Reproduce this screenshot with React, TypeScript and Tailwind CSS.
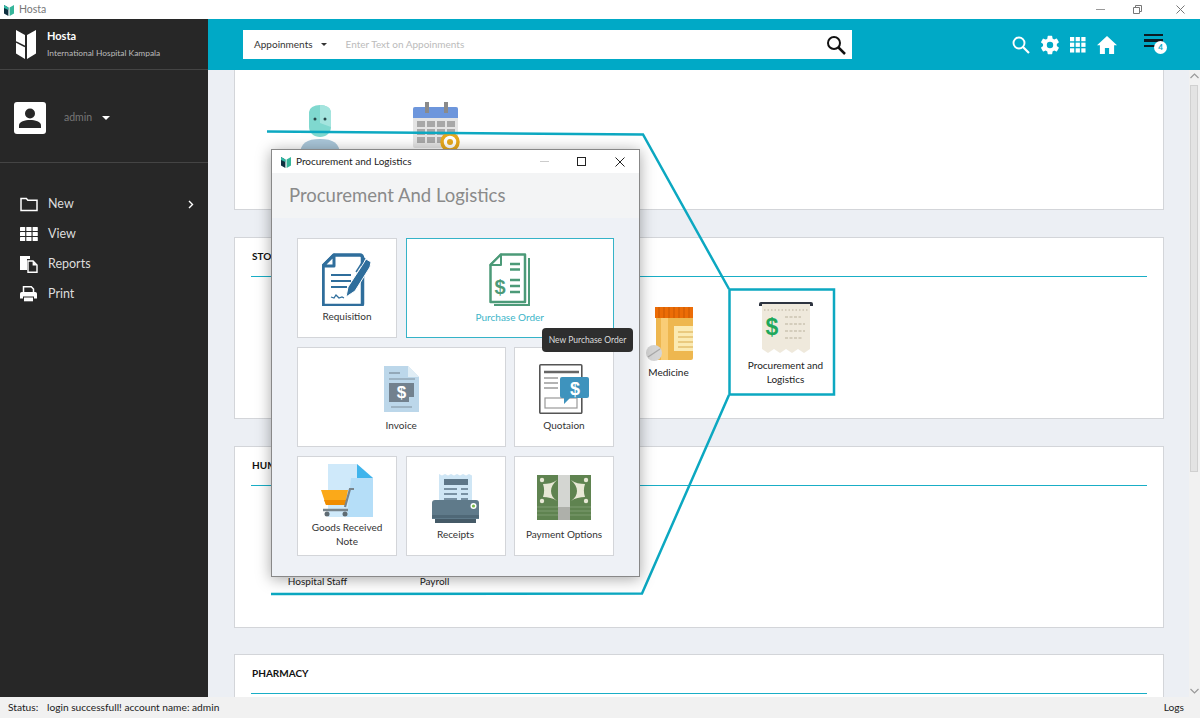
import type { ReactNode } from "react";

const font = { fontFamily: 'Lato, "Open Sans", sans-serif' };

function SmallLogo() {
  return (
    <svg width="10" height="12" viewBox="0 0 10 12">
      <path d="M0 1l4.400 2.400V12L0 9.600z" fill="#0e2f3f" />
      <path d="M0 1l4.400 2.400V6L0 4z" fill="#2fb9a4" />
      <path d="M5.600 3.400L10 1v8.600L5.600 12z" fill="#35b59a" />
    </svg>
  );
}

function HostaLogo() {
  return (
    <svg width="20" height="30" viewBox="0 0 20 30" fill="#fff">
      <path d="M0 1l9 5v24l-9-5.500z" />
      <path d="M11 6l9-5v23.500L11 30z" />
      <path d="M0 13l9 4.500" stroke="#272727" strokeWidth="1.400" />
    </svg>
  );
}

function MenuIcon({ name }: { name: string }) {
  if (name === "New")
    return (
      <svg width="18" height="15" viewBox="0 0 18 15" fill="none" stroke="#fff" strokeWidth="1.500">
        <path d="M1 13.600V1.600h5.400l1.400 1.600H17v10.400z" />
      </svg>
    );
  if (name === "View")
    return (
      <svg width="18" height="14" viewBox="0 0 18 14" fill="#fff">
        {[0, 5, 10].map((y) =>
          [0, 6.300, 12.600].map((x) => <rect key={`${x}-${y}`} x={x} y={y} width="5.200" height="4" rx="0.600" />),
        )}
      </svg>
    );
  if (name === "Reports")
    return (
      <svg width="18" height="18" viewBox="0 0 18 18">
        <path d="M0 1h10v3H7v11H0z" fill="#fff" />
        <path d="M8 6h5l4 4v7.200H8z" fill="none" stroke="#fff" strokeWidth="1.400" />
        <path d="M12.600 6v4.400H17z" fill="#fff" />
      </svg>
    );
  return (
    <svg width="17" height="16" viewBox="0 0 17 16" fill="#fff">
      <path d="M3.500 6V.800h7.800l2.200 2.200v3" fill="none" stroke="#fff" strokeWidth="1.500" />
      <path d="M1.800 6h13.400A1.800 1.800 0 0 1 17 7.800v4.700h-3v-2H3v2H0V7.800A1.800 1.800 0 0 1 1.800 6z" />
      <rect x="4" y="11.500" width="9" height="3.800" />
    </svg>
  );
}

function GearIcon() {
  return (
    <svg width="22" height="22" viewBox="0 0 24 24" fill="#fff">
      <path d="M19.400 13c.05-.33.1-.66.1-1s-.05-.67-.1-1l2.100-1.650a.5.500 0 0 0 .12-.64l-2-3.460a.5.500 0 0 0-.61-.22l-2.490 1a7.300 7.300 0 0 0-1.730-1l-.38-2.650A.49.490 0 0 0 13.930 2h-4a.49.490 0 0 0-.49.420l-.38 2.650a7.700 7.700 0 0 0-1.730 1l-2.490-1a.49.490 0 0 0-.61.220l-2 3.460a.49.490 0 0 0 .12.640L4.470 11c-.05.330-.1.670-.1 1s.05.670.1 1l-2.110 1.650a.5.500 0 0 0-.12.640l2 3.460c.12.220.38.300.61.220l2.490-1c.52.400 1.080.730 1.730 1l.38 2.650c.03.240.24.420.49.420h4c.25 0 .46-.18.49-.42l.38-2.650c.65-.27 1.210-.6 1.730-1l2.490 1c.23.080.49 0 .61-.22l2-3.460a.5.500 0 0 0-.12-.64zM12 15.500a3.500 3.500 0 1 1 0-7 3.500 3.500 0 0 1 0 7z" />
    </svg>
  );
}

function TopIcons() {
  return (
    <div className="flex items-center">
      <svg className="mr-[9px]" width="18" height="18" viewBox="0 0 18 18" fill="none" stroke="#fff" strokeWidth="1.900">
        <circle cx="7" cy="7" r="5.500" />
        <path d="M11 11l6 6" strokeWidth="2.200" />
      </svg>
      <GearIcon />
      <svg className="ml-[9px]" width="16" height="16" viewBox="0 0 17 17" fill="#fff">
        {[0, 6, 12].map((y) =>
          [0, 6, 12].map((x) => <rect key={`${x}-${y}`} x={x} y={y} width="4.500" height="4.500" />),
        )}
      </svg>
      <svg className="ml-[11px]" width="20" height="18" viewBox="0 0 20 18" fill="#fff">
        <path d="M10 0L0 9.200h2.900V18h5v-6h4.200v6h5V9.200H20z" />
      </svg>
      <div className="relative ml-[27px] mr-[36px] h-[24px] w-[20px]">
        <div className="mt-[1px] flex flex-col gap-[3px]">
          <div className="h-[2.500px] w-[19px] bg-[#0b1b22]" />
          <div className="h-[2.500px] w-[19px] bg-[#0b1b22]" />
          <div className="h-[2.500px] w-[14px] bg-[#0b1b22]" />
        </div>
        <span className="absolute left-[10px] top-[8px] flex h-[13px] w-[13px] items-center justify-center rounded-full bg-white text-[8px] font-bold text-[#00a9c6]">
          4
        </span>
      </div>
    </div>
  );
}

function RequisitionIcon() {
  return (
    <svg width="50" height="53" viewBox="0 0 50 53">
      <path d="M12 2h26a2.500 2.500 0 0 1 2.500 2.500v46a2 2 0 0 1-2 2H3a2 2 0 0 1-2-2V13z" fill="#fff" stroke="#2f6e9c" strokeWidth="3.500" strokeLinejoin="round" />
      <path d="M12 2v11H1z" fill="#fff" stroke="#2f6e9c" strokeWidth="3" strokeLinejoin="round" />
      <path d="M9 22h20M9 28h20M9 34h16" stroke="#2f6e9c" strokeWidth="2" />
      <path d="M9 44l3 1 2-3 3 3 3-1 2 1" stroke="#2f6e9c" strokeWidth="1.300" fill="none" />
      <path d="M24 44l2-10 15-23 3-5 5 3-1 5-15 24z" fill="#2f6e9c" stroke="#fff" strokeWidth="1" />
      <path d="M34 19l9-14" stroke="#2f6e9c" strokeWidth="1.400" />
    </svg>
  );
}

function PurchaseOrderIcon() {
  return (
    <svg width="42" height="54" viewBox="0 0 42 54">
      <path d="M39 5h2v48H5v-2h34z" fill="#4c9a78" />
      <path d="M12 1.500h24v47.500H1.500V12z" fill="#fff" stroke="#4c9a78" strokeWidth="2.500" strokeLinejoin="round" />
      <path d="M12 1.500V12H1.500z" fill="#fff" stroke="#4c9a78" strokeWidth="2" strokeLinejoin="round" />
      <path d="M21 11h10M21 16.500h10M21 27h10M21 33h10M21 39h10" stroke="#4c9a78" strokeWidth="2.400" />
      <text x="11" y="41" fontSize="20" fontWeight="700" fill="#4c9a78" textAnchor="middle" fontFamily="Liberation Sans">$</text>
    </svg>
  );
}

function InvoiceIcon() {
  return (
    <svg width="35" height="46" viewBox="0 0 35 46">
      <path d="M0 0h24l11 11v35H0z" fill="#bcd7ea" />
      <path d="M24 0l11 11H24z" fill="#e0edf5" />
      <path d="M5 7h11" stroke="#7e8f9c" strokeWidth="1.300" />
      <path d="M5 13h26M7 41h21" stroke="#7e8f9c" strokeWidth="1.200" />
      <path d="M5 17h25v14h-5v5H5z" fill="#72818e" />
      <text x="17.500" y="32" fontSize="17" fontWeight="700" fill="#fff" textAnchor="middle" fontFamily="Liberation Sans">$</text>
    </svg>
  );
}

function QuotationIcon() {
  return (
    <svg width="50" height="50" viewBox="0 0 50 50">
      <rect x="0.800" y="0.800" width="42" height="48.500" rx="1" fill="#fff" stroke="#555" strokeWidth="1.600" />
      <path d="M5 8h35" stroke="#666" strokeWidth="2.400" />
      <path d="M5 14h14M5 19h14M5 24h14" stroke="#9a9a9a" strokeWidth="1.300" />
      <rect x="6" y="34" width="32" height="10" fill="#fff" stroke="#999" strokeWidth="1.200" />
      <path d="M23 13h25a2 2 0 0 1 2 2v17a2 2 0 0 1-2 2H31l-6 6v-6h-2a2 2 0 0 1-2-2V15a2 2 0 0 1 2-2z" fill="#3e93bd" />
      <text x="36" y="31" fontSize="18" fontWeight="700" fill="#fff" textAnchor="middle" fontFamily="Liberation Sans">$</text>
    </svg>
  );
}

function GoodsIcon() {
  return (
    <svg width="52" height="53" viewBox="0 0 52 53">
      <path d="M7 0h29l16 14v39H7z" fill="#cfe9fa" />
      <path d="M36 0l16 14H36z" fill="#3fb4ec" />
      <path d="M30 14l22 0v39H26z" fill="#b5def8" />
      <path d="M0 26h27l-3 15H5z" fill="#fba919" />
      <path d="M5 41h19l1-5H3z" fill="#f08c00" />
      <path d="M24 43l5-18h4" stroke="#78848c" strokeWidth="2.200" fill="none" />
      <path d="M2 46h25" stroke="#78848c" strokeWidth="2.500" />
      <circle cx="6" cy="50" r="2.500" fill="#5f6b73" />
      <circle cx="24" cy="50" r="2.500" fill="#5f6b73" />
    </svg>
  );
}

function ReceiptsIcon() {
  return (
    <svg width="47" height="50" viewBox="0 0 47 50">
      <path d="M7 1l3 1.500L13 1l3 1.500L19 1l3 1.500L25 1l3 1.500L31 1l3 1.500L37 1l3 1.500V30H7z" fill="#cfe6f5" />
      <path d="M12 6h24v6H12z" fill="#5d7688" />
      <path d="M12 16h13M29 16h7M12 21h13M29 21h7M12 26h13M29 26h7" stroke="#5d7688" strokeWidth="1.500" />
      <path d="M3 27h41a3 3 0 0 1 3 3v16H0V30a3 3 0 0 1 3-3z" fill="#5f7a8a" />
      <rect x="3" y="46" width="41" height="4" fill="#455a67" />
      <path d="M0 42h47v3H0z" fill="#4f6877" />
      <circle cx="41.500" cy="33" r="3" fill="#fff" />
      <circle cx="41.500" cy="33" r="1.600" fill="#7dbb4e" />
    </svg>
  );
}

function PaymentIcon() {
  return (
    <svg width="54" height="45" viewBox="0 0 54 45">
      <rect width="54" height="45" fill="#5f8350" />
      <path d="M0 32h54M0 36h54M0 40h54" stroke="#7e9c70" strokeWidth="1" />
      <rect x="21" width="12" height="45" fill="#d4d6d2" />
      <rect x="21" y="32" width="12" height="13" fill="#aeb0aa" />
      <path d="M6 9c5 0 10-1 14-4-4 4-6 7-6 11s2 7 6 10c-4-3-9-4-14-4 1.500-4 1.500-9 0-13z" fill="#e8e8d6" />
      <path d="M48 9c-5 0-10-1-14-4 4 4 6 7 6 11s-2 7-6 10c4-3 9-4 14-4-1.500-4-1.500-9 0-13z" fill="#e8e8d6" />
      <circle cx="5" cy="5" r="2.200" fill="#e8e8d6" />
      <circle cx="49" cy="5" r="2.200" fill="#e8e8d6" />
      <circle cx="5" cy="26" r="2.200" fill="#e8e8d6" />
      <circle cx="49" cy="26" r="2.200" fill="#e8e8d6" />
    </svg>
  );
}

function MedicineIcon() {
  return (
    <svg width="48" height="54" viewBox="0 0 48 54">
      <path d="M11 10h37v41a2 2 0 0 1-2 2H13a2 2 0 0 1-2-2z" fill="#eeb74f" />
      <path d="M16 10h7v43h-7z" fill="#f9cd76" />
      <rect x="10" y="0" width="38" height="11" fill="#ec6c06" />
      <path d="M14 0v11M19 0v11M24 0v11M29 0v11M34 0v11M39 0v11M44 0v11" stroke="#c95903" strokeWidth="1" />
      <rect x="29" y="19" width="19" height="25" fill="#fbeab2" />
      <path d="M33 25h15M33 30h15M33 35h15M33 40h15" stroke="#d9a94c" strokeWidth="1.200" />
      <circle cx="9" cy="46" r="8" fill="#d5d5d5" />
      <path d="M3 50l12-8" stroke="#aaa" strokeWidth="1.400" />
    </svg>
  );
}

function ReceiptIcon() {
  return (
    <svg width="54" height="53" viewBox="0 0 54 53">
      <path d="M3 3h48v45l-6 4-6-4-6 4-6-4-6 4-6-4-6 4-6-4z" fill="#efe9dc" />
      <path d="M0 3a2 2 0 0 1 2-2h50a2 2 0 0 1 2 2v2H51V3H3v2H0z" fill="#2e3440" />
      <path d="M5 9h44" stroke="#b9b19c" strokeWidth="1" strokeDasharray="1.500 2" />
      <text x="13" y="34" fontSize="23" fontWeight="700" fill="#20a85b" textAnchor="middle" fontFamily="Liberation Sans">$</text>
      <path d="M26 16h16M26 23h20M26 30h20M26 37h18" stroke="#b9b19c" strokeWidth="1.200" strokeDasharray="3 1.500" />
    </svg>
  );
}

function RobotIcon() {
  return (
    <svg width="44" height="60" viewBox="0 0 44 60">
      <path d="M2 50c0-12 7-16 20-16s20 4 20 16v10H2z" fill="#a9c6d8" />
      <path d="M11 7a11 7 0 0 1 22 0v15c0 6-5 10-11 10S11 28 11 22z" fill="#7fd8cf" />
      <path d="M22 0a11 7 0 0 1 11 7v15l-11-4z" fill="#a4e4de" />
      <circle cx="17" cy="14" r="1.500" fill="#27484a" />
      <circle cx="27" cy="14" r="1.500" fill="#27484a" />
    </svg>
  );
}

function CalendarIcon() {
  return (
    <svg width="52" height="52" viewBox="0 0 52 52">
      <rect x="0" y="5" width="45" height="41" rx="2" fill="#e4e4e4" />
      <path d="M0 16V7a2 2 0 0 1 2-2h41a2 2 0 0 1 2 2v9z" fill="#6d96dc" />
      <rect x="12" y="0" width="4" height="11" fill="#8a8a8a" />
      <rect x="31" y="0" width="4" height="11" fill="#8a8a8a" />
      {[19, 27, 35].map((y) =>
        [4, 14, 24, 34].map((x) => <rect key={`${x}-${y}`} x={x} y={y} width="8" height="6" fill="#a8a8a8" />),
      )}
      <circle cx="37" cy="40" r="8" fill="#fff" stroke="#e8a91b" strokeWidth="3.500" />
      <circle cx="37" cy="40" r="3" fill="#e8a91b" />
    </svg>
  );
}

function Tile({
  label,
  icon,
  active,
  wide,
}: {
  label: ReactNode;
  icon: ReactNode;
  active?: boolean;
  wide?: boolean;
}) {
  return (
    <div
      className={`flex h-[100px] flex-col items-center justify-center border bg-white ${
        wide ? "col-span-2" : ""
      } ${active ? "border-[#35b3c8] text-[#3cb4c8]" : "border-[#d3d5d9] text-[#333]"}`}
    >
      <div className="flex min-h-[52px] items-center">{icon}</div>
      <span className="mt-[3px] text-center text-[10px] leading-[14px]">{label}</span>
    </div>
  );
}

function ProcurementDialog() {
  return (
    <div className="absolute left-[271px] top-[149px] z-20 h-[428px] w-[369px] border border-[#888] bg-[#eef1f6] shadow-[0_2px_14px_rgba(0,0,0,0.35)]">
      <div className="flex h-[23px] items-center bg-white pl-[9px] text-[10px] text-[#222]">
        <SmallLogo />
        <span className="ml-[5px]">Procurement and Logistics</span>
        <div className="ml-auto mr-[14px] flex items-center">
          <div className="mr-[28px] h-px w-[9px] bg-[#ccc]" />
          <div className="mr-[29px] h-[9px] w-[9px] border border-[#222]" />
          <svg width="10" height="10" viewBox="0 0 10 10" stroke="#222" strokeWidth="1">
            <path d="M0.500 0.500l9 9M9.500 0.500l-9 9" />
          </svg>
        </div>
      </div>
      <div className="flex h-[45px] items-center bg-[#f3f4f5] pl-[17px] text-[18.500px] text-[#8a8a8a]">
        Procurement And Logistics
      </div>
      <div className="grid grid-cols-[100px_100px_100px] gap-x-[8.500px] gap-y-[9px] pl-[25px] pt-[20px]">
        <Tile label="Requisition" icon={<RequisitionIcon />} />
        <Tile label="Purchase Order" icon={<PurchaseOrderIcon />} active wide />
        <Tile label="Invoice" icon={<InvoiceIcon />} wide />
        <Tile label="Quotaion" icon={<QuotationIcon />} />
        <Tile
          label={
            <>
              Goods Received
              <br />
              Note
            </>
          }
          icon={<GoodsIcon />}
        />
        <Tile label="Receipts" icon={<ReceiptsIcon />} />
        <Tile label="Payment Options" icon={<PaymentIcon />} />
      </div>
    </div>
  );
}

function Item({ label, icon }: { label?: ReactNode; icon?: ReactNode }) {
  return (
    <div className="flex h-[100px] w-[105px] flex-col items-center justify-center text-center text-[10px] leading-[14px] text-[#222]">
      {icon}
      {label && <span className="mt-[4px]">{label}</span>}
    </div>
  );
}

function Section({ title, children, className }: { title: string; children?: ReactNode; className?: string }) {
  return (
    <div className={`h-[182px] shrink-0 border border-[#d3d5d9] bg-white px-[16px] ${className ?? ""}`}>
      <div className="mt-[10px] h-[16px] pl-px text-[10px] font-bold leading-[16px] text-[#111]">{title}</div>
      <div className="mt-[12px] h-px bg-[#19aec6]" />
      <div className="ml-[14px] mt-[16px] flex gap-[12px]">{children}</div>
    </div>
  );
}

function Scrollbar() {
  return (
    <div className="relative flex w-[11px] shrink-0 flex-col items-center justify-between bg-[#f1f1f1] py-[3px]">
      <svg width="9" height="6" viewBox="0 0 9 6" fill="none" stroke="#9a9a9a" strokeWidth="1.200">
        <path d="M0.500 5l4-4 4 4" />
      </svg>
      <div className="absolute left-px top-[15px] h-[387px] w-[8px] border border-[#d0d0d0] bg-[#e3e3e3]" />
      <svg width="9" height="6" viewBox="0 0 9 6" fill="none" stroke="#9a9a9a" strokeWidth="1.200">
        <path d="M0.500 1l4 4 4-4" />
      </svg>
    </div>
  );
}

function Connector() {
  return (
    <svg className="pointer-events-none absolute inset-0 z-10" width="1200" height="718" fill="none" stroke="#0ca8c1" strokeWidth="2.500">
      <path d="M267 131.500L643 134.500L729 289" />
      <path d="M271 594L642 593.500L729 395" />
      <rect x="729.500" y="289.500" width="104.500" height="105" />
    </svg>
  );
}

const menu = ["New", "View", "Reports", "Print"];

export default function App() {
  return (
    <div className="relative flex h-[718px] w-[1200px] flex-col overflow-hidden bg-white" style={font}>
      {/* window title bar */}
      <div className="flex h-[19px] shrink-0 items-center pl-[4px] text-[10.500px] text-[#777]">
        <SmallLogo />
        <span className="ml-[5px]">Hosta</span>
        <div className="ml-auto flex items-center pr-[15px]">
          <div className="mr-[28px] h-px w-[9px] bg-[#999]" />
          <svg className="mr-[34px]" width="9" height="9" viewBox="0 0 9 9" fill="none" stroke="#777">
            <path d="M0.500 2.500h6v6h-6zM2.500 2.500v-2h6v6h-2" />
          </svg>
          <svg width="9" height="9" viewBox="0 0 9 9" stroke="#777">
            <path d="M0.500 0.500l8 8M8.500 0.500l-8 8" />
          </svg>
        </div>
      </div>

      <div className="flex min-h-0 flex-1">
        {/* sidebar */}
        <aside className="flex w-[208px] shrink-0 flex-col bg-[#272727]">
          <div className="flex h-[51px] shrink-0 items-center border-b border-[#444] pl-[16px]">
            <HostaLogo />
            <div className="ml-[11px]">
              <div className="text-[11px] font-bold leading-[14px] text-white">Hosta</div>
              <div className="mt-[5px] text-[8.400px] leading-[11px] text-[#bbb]">International Hospital Kampala</div>
            </div>
          </div>
          <div className="flex h-[93px] shrink-0 items-center border-b border-[#444] pl-[14px] pt-[3px]">
            <div className="flex h-[32px] w-[32px] items-center justify-center rounded-[3px] bg-white">
              <svg width="22" height="20" viewBox="0 0 22 20" fill="#272727">
                <circle cx="11" cy="5.500" r="5" />
                <path d="M0 20v-2.500C0 13.500 6 12 11 12s11 1.500 11 5.500V20z" />
              </svg>
            </div>
            <span className="ml-[18px] text-[10.500px] text-[#777]">admin</span>
            <span className="ml-[10px] h-0 w-0 border-x-[4.500px] border-t-[4.500px] border-x-transparent border-t-white" />
          </div>
          <nav className="mt-[26px] flex flex-col pl-[20px] pr-[14px]">
            {menu.map((m) => (
              <div key={m} className="flex h-[30px] items-center text-[12.500px] text-[#ddd]">
                <span className="flex w-[28px] items-center">
                  <MenuIcon name={m} />
                </span>
                {m}
                {m === "New" && (
                  <svg className="ml-auto" width="6" height="9" viewBox="0 0 6 9" fill="none" stroke="#fff" strokeWidth="1.400">
                    <path d="M1 1l3.500 3.500L1 8" />
                  </svg>
                )}
              </div>
            ))}
          </nav>
        </aside>

        <div className="flex min-w-0 flex-1 flex-col">
          {/* top bar */}
          <header className="flex h-[51px] shrink-0 items-center justify-between bg-[#00a9c6] pl-[35px]">
            <div className="flex h-[29px] w-[609px] items-center bg-white pl-[11px] pr-[6px]">
              <span className="text-[10px] text-[#333]">Appoinments</span>
              <span className="ml-[8px] h-0 w-0 border-x-[3.500px] border-t-[3.500px] border-x-transparent border-t-[#333]" />
              <span className="ml-[19px] text-[10px] text-[#bbb]">Enter Text on Appoinments</span>
              <svg className="ml-auto" width="20" height="20" viewBox="0 0 20 20" fill="none" stroke="#111" strokeWidth="2">
                <circle cx="8" cy="8" r="6" />
                <path d="M12.500 12.500l6.500 6.500" strokeWidth="2.500" />
              </svg>
            </div>
            <TopIcons />
          </header>

          {/* scrolling content */}
          <div className="flex min-h-0 flex-1 bg-[#eceff4]">
            <div className="flex min-w-0 flex-1 flex-col gap-[27px] overflow-hidden pl-[26px] pr-[25px]">
              <div className="-mt-px h-[141px] shrink-0 border border-[#d3d5d9] bg-white pl-[18px]">
                <div className="ml-[14px] mt-[32px] flex gap-[14px]">
                  <div className="mt-[3px] flex w-[105px] justify-center">
                    <RobotIcon />
                  </div>
                  <div className="flex w-[105px] justify-center">
                    <CalendarIcon />
                  </div>
                </div>
              </div>
              <Section title="STORES">
                <Item />
                <Item />
                <Item />
                <Item label="Medicine" icon={<MedicineIcon />} />
                <Item
                  label={
                    <>
                      Procurement and
                      <br />
                      Logistics
                    </>
                  }
                  icon={<ReceiptIcon />}
                />
              </Section>
              <Section title="HUMAN RESOURCE">
                <Item label="Hospital Staff" icon={<div className="h-[54px]" />} />
                <Item label="Payroll" icon={<div className="h-[54px]" />} />
              </Section>
              <Section title="PHARMACY" className="-mt-px" />
            </div>
            <Scrollbar />
          </div>
        </div>
      </div>

      {/* status bar */}
      <footer className="flex h-[21px] shrink-0 items-center bg-[#f1f1f1] pl-[8px] pr-[16px] text-[10.200px] text-[#222]">
        <span className="w-[39px]">Status:</span>
        <span>login successfull! account name: admin</span>
        <span className="ml-auto">Logs</span>
      </footer>

      <Connector />
      <ProcurementDialog />
      <div className="absolute left-[542px] top-[328px] z-30 flex h-[24px] w-[91px] items-center justify-center rounded-[4px] bg-[#2e2e2e] text-[8.500px] text-[#ddd]">
        New Purchase Order
      </div>
    </div>
  );
}
